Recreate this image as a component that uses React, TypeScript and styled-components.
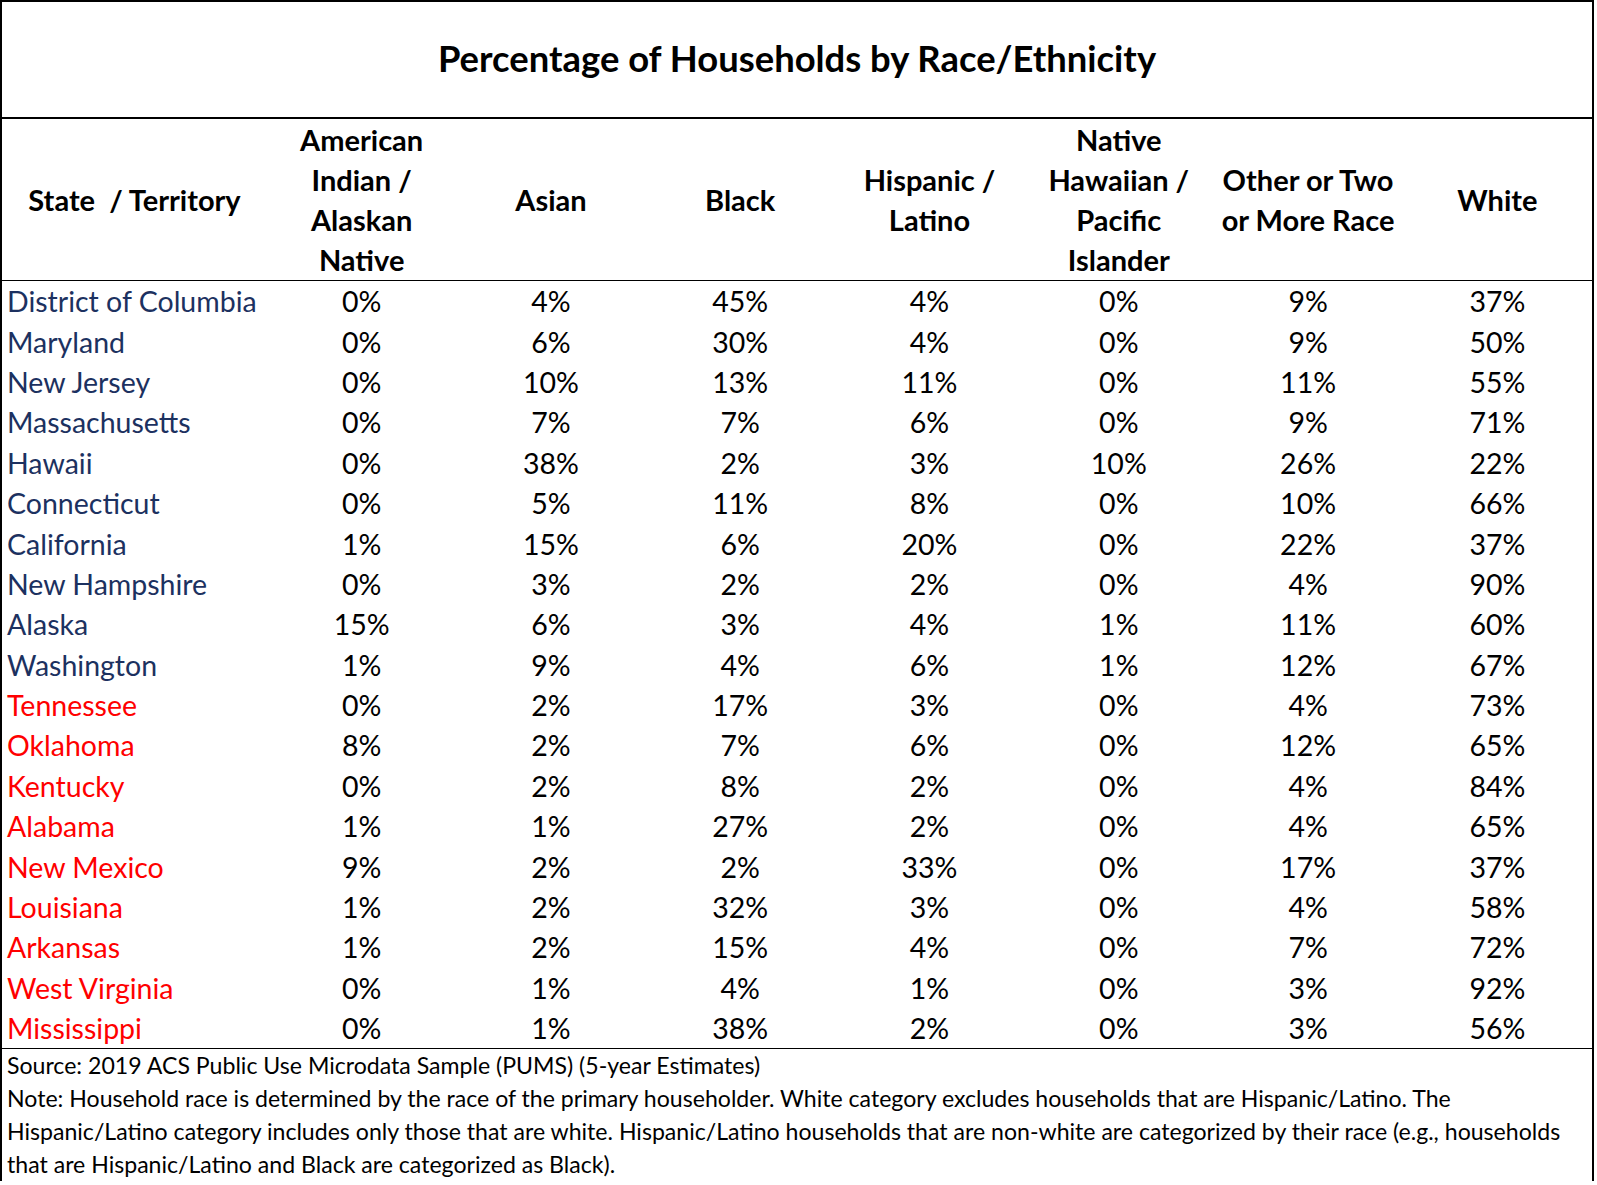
import styled, { createGlobalStyle } from 'styled-components';

const GlobalStyle = createGlobalStyle`
  body {
    margin: 0;
    background: #ffffff;
    font-family: Lato, "Open Sans", "Liberation Sans", sans-serif;
  }
`;

const Frame = styled.div`
  width: 1594px;
  box-sizing: border-box;
  border-top: 2px solid #000;
  border-left: 2px solid #000;
  border-right: 2px solid #000;
  color: #000;
`;

const TitleBar = styled.div`
  height: 117px;
  padding-bottom: 3px;
  box-sizing: border-box;
  display: flex;
  align-items: center;
  justify-content: center;
  border-bottom: 2px solid #000;
  font-size: 36.4px;
  font-weight: 700;
`;

const Grid = styled.div`
  display: grid;
  grid-template-columns: 265px repeat(7, 1fr);
`;

const HeadCell = styled.div`
  height: 161px;
  display: flex;
  align-items: center;
  justify-content: center;
  text-align: center;
  font-size: 29px;
  font-weight: 700;
  line-height: 40px;
  border-bottom: 1.5px solid #000;
`;

const HeadText = styled.span`
  white-space: pre;
`;

const Cell = styled.div<{ $tone?: 'blue' | 'red' }>`
  height: 40.4px;
  display: flex;
  align-items: center;
  justify-content: ${({ $tone }) => ($tone ? 'flex-start' : 'center')};
  padding-left: ${({ $tone }) => ($tone ? '5px' : '0')};
  font-size: 28.5px;
  color: ${({ $tone }) =>
    $tone === 'blue' ? '#1c3160' : $tone === 'red' ? '#ff0000' : '#000'};
  white-space: nowrap;
`;

const Notes = styled.div`
  border-top: 1.5px solid #000;
  padding: 0 0 0 5px;
  font-size: 23.1px;
  line-height: 33px;
`;

const NoteLine = styled.div`
  white-space: nowrap;
`;

const headers = [
  'State  / Territory',
  'American\nIndian /\nAlaskan\nNative',
  'Asian',
  'Black',
  'Hispanic /\nLatino',
  'Native\nHawaiian /\nPacific\nIslander',
  'Other or Two\nor More Race',
  'White',
];

const rows: [string, 'blue' | 'red', number[]][] = [
  ['District of Columbia', 'blue', [0, 4, 45, 4, 0, 9, 37]],
  ['Maryland', 'blue', [0, 6, 30, 4, 0, 9, 50]],
  ['New Jersey', 'blue', [0, 10, 13, 11, 0, 11, 55]],
  ['Massachusetts', 'blue', [0, 7, 7, 6, 0, 9, 71]],
  ['Hawaii', 'blue', [0, 38, 2, 3, 10, 26, 22]],
  ['Connecticut', 'blue', [0, 5, 11, 8, 0, 10, 66]],
  ['California', 'blue', [1, 15, 6, 20, 0, 22, 37]],
  ['New Hampshire', 'blue', [0, 3, 2, 2, 0, 4, 90]],
  ['Alaska', 'blue', [15, 6, 3, 4, 1, 11, 60]],
  ['Washington', 'blue', [1, 9, 4, 6, 1, 12, 67]],
  ['Tennessee', 'red', [0, 2, 17, 3, 0, 4, 73]],
  ['Oklahoma', 'red', [8, 2, 7, 6, 0, 12, 65]],
  ['Kentucky', 'red', [0, 2, 8, 2, 0, 4, 84]],
  ['Alabama', 'red', [1, 1, 27, 2, 0, 4, 65]],
  ['New Mexico', 'red', [9, 2, 2, 33, 0, 17, 37]],
  ['Louisiana', 'red', [1, 2, 32, 3, 0, 4, 58]],
  ['Arkansas', 'red', [1, 2, 15, 4, 0, 7, 72]],
  ['West Virginia', 'red', [0, 1, 4, 1, 0, 3, 92]],
  ['Mississippi', 'red', [0, 1, 38, 2, 0, 3, 56]],
];

const notes = [
  'Source: 2019 ACS Public Use Microdata Sample (PUMS) (5-year Estimates)',
  'Note: Household race is determined by the race of the primary householder. White category excludes households that are Hispanic/Latino. The',
  'Hispanic/Latino category includes only those that are white. Hispanic/Latino households that are non-white are categorized by their race (e.g., households',
  'that are Hispanic/Latino and Black are categorized as Black).',
];

export default function App() {
  return (
    <>
      <GlobalStyle />
      <Frame>
        <TitleBar>Percentage of Households by Race/Ethnicity</TitleBar>
        <Grid>
          {headers.map((h) => (
            <HeadCell key={h}>
              <HeadText>{h}</HeadText>
            </HeadCell>
          ))}
          {rows.map(([name, tone, values]) => [
            <Cell key={name} $tone={tone}>
              {name}
            </Cell>,
            ...values.map((v, i) => <Cell key={name + i}>{v}%</Cell>),
          ])}
        </Grid>
        <Notes>
          {notes.map((n) => (
            <NoteLine key={n}>{n}</NoteLine>
          ))}
        </Notes>
      </Frame>
    </>
  );
}
